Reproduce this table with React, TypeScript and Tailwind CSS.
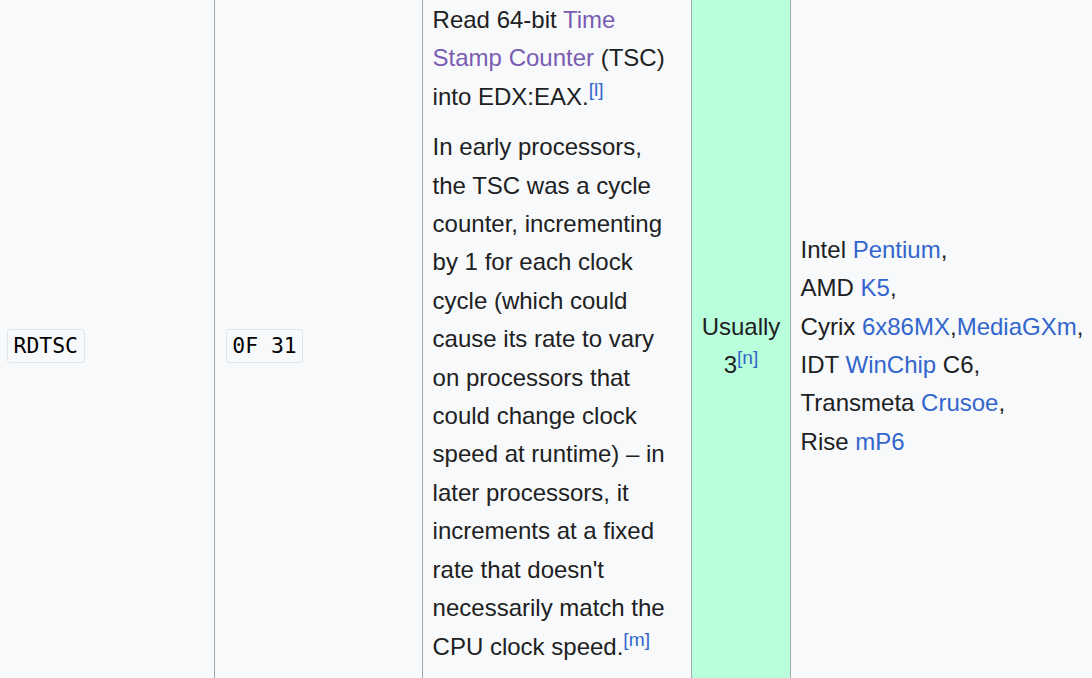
export default function App() {
  const sup = (n: string) => (
    <sup className="static text-[0.8em] leading-none align-super text-[#3366cc] whitespace-nowrap">[{n}]</sup>
  );
  const link = 'text-[#3366cc]';
  const visited = 'text-[#795cb2]';

  return (
    <div className="h-[678px] w-[1092px] overflow-hidden bg-[#f8f9fa] text-[#202122] font-['Liberation_Sans',Arial,sans-serif] text-[24px] leading-[38.4px]">
      <div className="flex h-[714px] -mt-[11px]">
        {/* Instruction */}
        <div className="w-[215px] shrink-0 border-r border-[#a2a9b1] flex items-center pl-[7px]">
          <code className="inline-block font-['DejaVu_Sans_Mono',monospace] text-[21.4px] leading-[28.6px] text-black bg-[#f8f9fa] border border-[#e2e5e9] rounded-[3px] px-[5.6px] py-[1.4px]">
            RDTSC
          </code>
        </div>

        {/* Opcode */}
        <div className="w-[208px] shrink-0 border-r border-[#a2a9b1] flex items-center pl-[10.7px]">
          <code className="inline-block font-['DejaVu_Sans_Mono',monospace] text-[21.4px] leading-[28.6px] text-black bg-[#f8f9fa] border border-[#e2e5e9] rounded-[3px] px-[5.6px] py-[1.4px] whitespace-pre">
            0F 31
          </code>
        </div>

        {/* Description */}
        <div className="w-[269px] shrink-0 border-r border-[#a2a9b1] px-[9.6px] pt-[12px]">
          <p>
            Read 64-bit <span className={visited}>Time Stamp Counter</span> (TSC) into EDX:EAX.{sup('l')}
          </p>
          <p className="mt-[12px]">
            In early processors, the TSC was a cycle counter, incrementing by 1 for each clock cycle (which could
            cause its rate to vary on processors that could change clock speed at runtime) – in later processors, it
            increments at a fixed rate that doesn't necessarily match the CPU clock speed.{sup('m')}
          </p>
        </div>

        {/* Ring */}
        <div className="w-[99px] shrink-0 border-r border-[#a2a9b1] bg-[#b9ffdb] flex items-center justify-center px-[9.6px] text-center">
          <div>
            Usually 3{sup('n')}
          </div>
        </div>

        {/* Added in */}
        <div className="flex-1 flex items-center pl-[9.6px] whitespace-nowrap">
          <div>
            <div>
              Intel <span className={link}>Pentium</span>,
            </div>
            <div>
              AMD <span className={link}>K5</span>,
            </div>
            <div>
              Cyrix <span className={link}>6x86MX</span>,<span className={link}>MediaGXm</span>,
            </div>
            <div>
              IDT <span className={link}>WinChip</span> C6,
            </div>
            <div>
              Transmeta <span className={link}>Crusoe</span>,
            </div>
            <div>
              Rise <span className={link}>mP6</span>
            </div>
          </div>
        </div>
      </div>
    </div>
  );
}
